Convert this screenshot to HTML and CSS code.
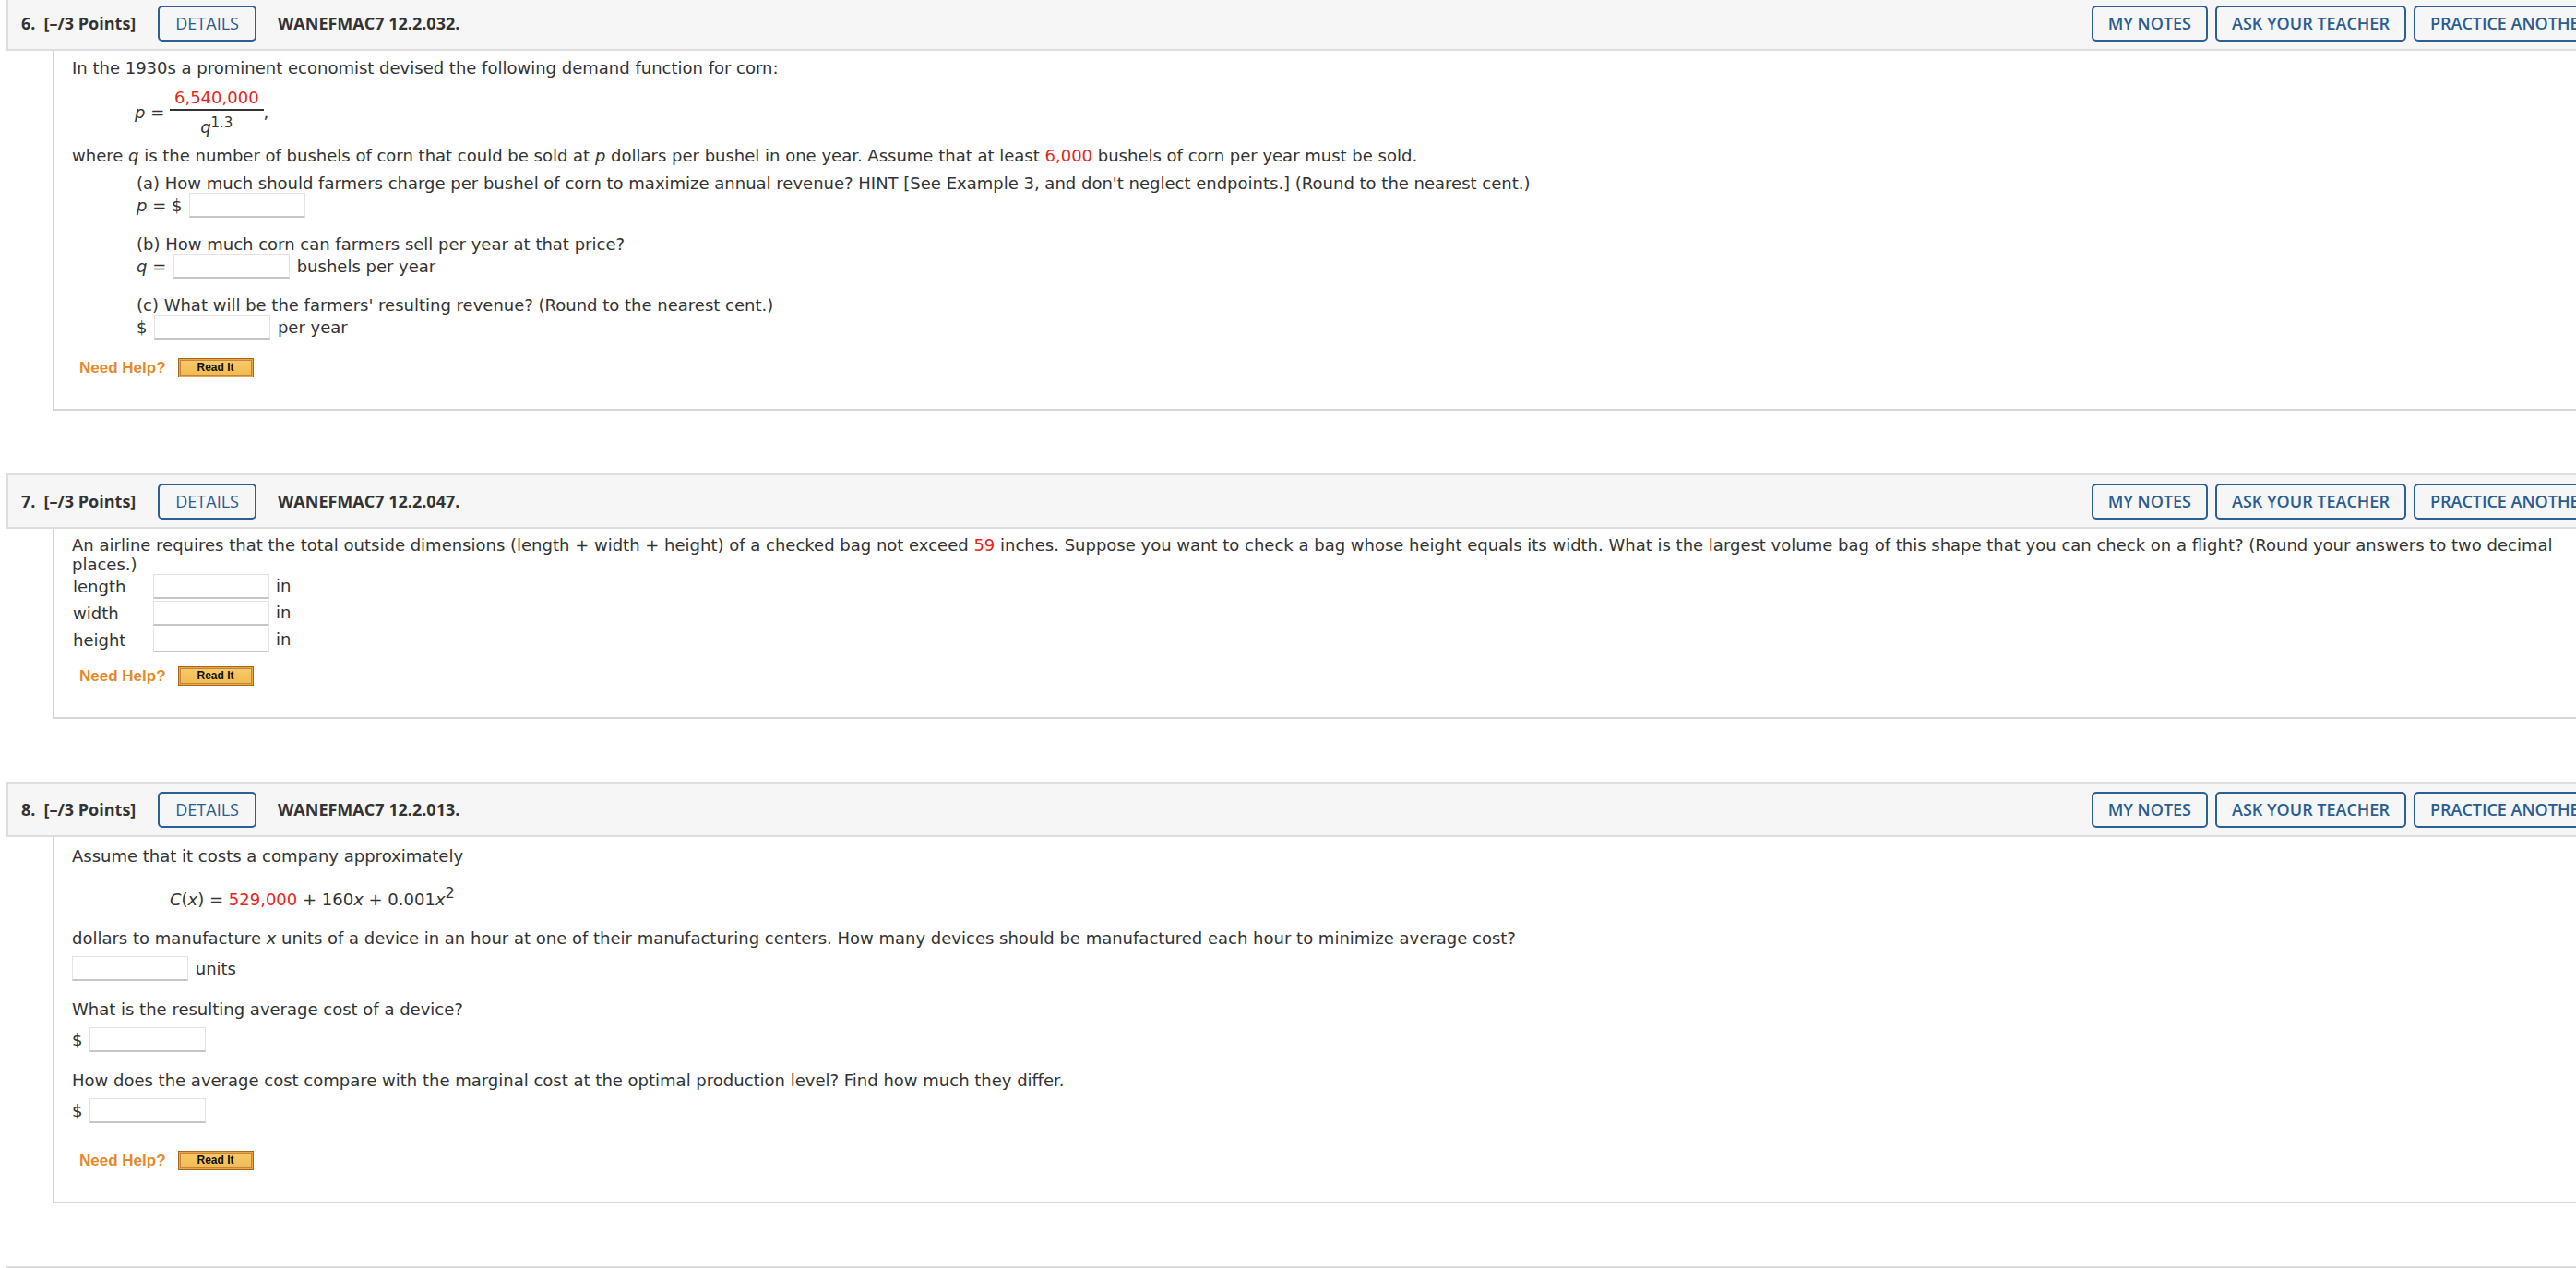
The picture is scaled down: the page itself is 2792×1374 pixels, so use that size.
FILE: index.html
```html
<!DOCTYPE html>
<html lang="en">
<head>
<meta charset="utf-8">
<title>WebAssign</title>
<link rel="stylesheet" href="styles.css">
</head>
<body>
<div class="page">

  <section class="question">
    <div class="qhead">
      <div class="qhead-left">
        <span class="qnum">6.</span><span class="qpts">[–/3 Points]</span>
        <button class="btn btn-details">DETAILS</button>
        <span class="qcode">WANEFMAC7 12.2.032.</span>
      </div>
      <div class="qhead-right">
        <button class="btn">MY NOTES</button>
        <button class="btn">ASK YOUR TEACHER</button>
        <button class="btn">PRACTICE ANOTHER</button>
      </div>
    </div>
    <div class="qbody">
      <p class="txt">In the 1930s a prominent economist devised the following demand function for corn:</p>
      <div class="eq"><i>p</i> = <span class="frac"><span class="num red">6,540,000</span><span class="den"><i>q</i><sup class="exp">1.3</sup></span></span>,</div>
      <p class="txt">where <i>q</i> is the number of bushels of corn that could be sold at <i>p</i> dollars per bushel in one year. Assume that at least <span class="red">6,000</span> bushels of corn per year must be sold.</p>
      <div class="parts">
        <div class="part">
          <p class="txt">(a) How much should farmers charge per bushel of corn to maximize annual revenue? HINT [See Example 3, and don't neglect endpoints.] (Round to the nearest cent.)</p>
          <div class="ans"><i>p</i> = $ <input class="blank" type="text"></div>
        </div>
        <div class="part">
          <p class="txt">(b) How much corn can farmers sell per year at that price?</p>
          <div class="ans"><i>q</i> = <input class="blank" type="text"> bushels per year</div>
        </div>
        <div class="part">
          <p class="txt">(c) What will be the farmers' resulting revenue? (Round to the nearest cent.)</p>
          <div class="ans">$ <input class="blank" type="text"> per year</div>
        </div>
      </div>
      <div class="help help-q6">
        <span class="help-label">Need Help?</span>
        <button class="readit"><span class="readit-in">Read It</span></button>
      </div>
    </div>
  </section>

  <section class="question">
    <div class="qhead">
      <div class="qhead-left">
        <span class="qnum">7.</span><span class="qpts">[–/3 Points]</span>
        <button class="btn btn-details">DETAILS</button>
        <span class="qcode">WANEFMAC7 12.2.047.</span>
      </div>
      <div class="qhead-right">
        <button class="btn">MY NOTES</button>
        <button class="btn">ASK YOUR TEACHER</button>
        <button class="btn">PRACTICE ANOTHER</button>
      </div>
    </div>
    <div class="qbody qbody-q7">
      <p class="txt">An airline requires that the total outside dimensions (length + width + height) of a checked bag not exceed <span class="red">59</span> inches. Suppose you want to check a bag whose height equals its width. What is the largest volume bag of this shape that you can check on a flight? (Round your answers to two decimal places.)</p>
      <div class="dims">
        <span class="dim-label">length</span><input class="blank" type="text"><span class="dim-unit">in</span>
        <span class="dim-label">width</span><input class="blank" type="text"><span class="dim-unit">in</span>
        <span class="dim-label">height</span><input class="blank" type="text"><span class="dim-unit">in</span>
      </div>
      <div class="help help-q7">
        <span class="help-label">Need Help?</span>
        <button class="readit"><span class="readit-in">Read It</span></button>
      </div>
    </div>
  </section>

  <section class="question">
    <div class="qhead">
      <div class="qhead-left">
        <span class="qnum">8.</span><span class="qpts">[–/3 Points]</span>
        <button class="btn btn-details">DETAILS</button>
        <span class="qcode">WANEFMAC7 12.2.013.</span>
      </div>
      <div class="qhead-right">
        <button class="btn">MY NOTES</button>
        <button class="btn">ASK YOUR TEACHER</button>
        <button class="btn">PRACTICE ANOTHER</button>
      </div>
    </div>
    <div class="qbody qbody-q8">
      <p class="txt">Assume that it costs a company approximately</p>
      <p class="txt cost"><i>C</i>(<i>x</i>) = <span class="red">529,000</span> + 160<i>x</i> + 0.001<i>x</i><sup class="sq">2</sup></p>
      <p class="txt gap-21">dollars to manufacture <i>x</i> units of a device in an hour at one of their manufacturing centers. How many devices should be manufactured each hour to minimize average cost?</p>
      <div class="ans gap-9"><input class="blank flush" type="text"> units</div>
      <p class="txt gap-20">What is the resulting average cost of a device?</p>
      <div class="ans gap-9">$ <input class="blank" type="text"></div>
      <p class="txt gap-20">How does the average cost compare with the marginal cost at the optimal production level? Find how much they differ.</p>
      <div class="ans gap-9">$ <input class="blank" type="text"></div>
      <div class="help help-q8">
        <span class="help-label">Need Help?</span>
        <button class="readit"><span class="readit-in">Read It</span></button>
      </div>
    </div>
  </section>

  <section class="question">
    <div class="qhead"></div>
  </section>

</div>
</body>
</html>
```

FILE: styles.css
```css
html, body {
  margin: 0;
  padding: 0;
  background: #ffffff;
  overflow: hidden;
}

body {
  font-family: "DejaVu Sans", Verdana, sans-serif;
  font-size: 18px;
  line-height: 21px;
  color: #333333;
}

.page {
  width: 2830px;
  margin-left: 7px;
  margin-top: -5px;
}

.question + .question {
  margin-top: 68px;
}

/* ---------- header bar ---------- */
.qhead {
  height: 60px;
  box-sizing: border-box;
  border: 2px solid #dedede;
  background: #f6f6f6;
  display: flex;
  align-items: center;
  justify-content: space-between;
  padding: 0 10px 0 14px;
  font-family: "Open Sans", sans-serif;
  font-size: 18px;
  color: #333333;
}

.qhead-left,
.qhead-right {
  display: flex;
  align-items: center;
}

.qhead-right {
  gap: 8px;
}

.qnum,
.qpts,
.qcode {
  font-weight: 700;
}

.qpts {
  margin-left: 9px;
}

.qcode {
  margin-left: 23px;
}

.btn {
  height: 39px;
  box-sizing: border-box;
  border: 2px solid #2c5f94;
  border-radius: 5px;
  background: transparent;
  color: #2a5d91;
  font-family: "Open Sans", sans-serif;
  font-size: 18px;
  font-weight: 600;
  padding: 0 16px;
  line-height: 1;
  white-space: nowrap;
}

.btn-details {
  margin-left: 24px;
  font-weight: 400;
  padding: 0 17px;
}

/* ---------- question body ---------- */
.qbody {
  margin-left: 50px;
  border-left: 2px solid #d2d2d2;
  border-bottom: 2px solid #d6d6d6;
  padding: 8px 37px 34px 19px;
}

.qbody-q7 {
  padding-top: 7px;
}

.qbody-q8 {
  padding-top: 10px;
}

.txt {
  margin: 0;
}

.red {
  color: #e4261d;
}

.eq {
  margin: 11px 0 10px 68px;
}

.frac {
  display: inline-block;
  vertical-align: -16px;
  text-align: center;
}

.num {
  display: block;
  padding: 0 5px 2px;
  border-bottom: 2px solid #333333;
}

.den {
  display: block;
  padding-top: 7px;
}

.exp {
  font-size: 15px;
  line-height: 0;
  vertical-align: 6px;
}

.parts {
  margin-top: 9px;
  margin-left: 70px;
}

.part + .part {
  margin-top: 18px;
}

.blank {
  width: 126px;
  height: 27px;
  box-sizing: border-box;
  border: 1px solid #e3e3e3;
  border-bottom: 2px solid #c6c6c6;
  border-radius: 0;
  margin: 0 2px;
  padding: 0 4px;
  font: inherit;
  background: #ffffff;
  vertical-align: baseline;
}

.blank.flush {
  margin-left: 0;
}

/* airline dims table */
.dims {
  display: grid;
  grid-template-columns: 88px 126px auto;
  row-gap: 2px;
  align-items: center;
}

.dims .blank {
  margin: 0;
}

.dim-label {
  padding-left: 1px;
}

.dim-unit {
  padding-left: 7px;
  margin-top: -3px;
}

/* cost function */
.cost {
  margin-top: 26px;
  margin-left: 106px;
}

.sq {
  font-size: 16px;
  line-height: 0;
  vertical-align: 8px;
}

.gap-21 { margin-top: 21px; }
.gap-20 { margin-top: 20px; }
.gap-9  { margin-top: 9px; }

/* ---------- need help ---------- */
.help {
  display: flex;
  align-items: center;
  gap: 13px;
  height: 21px;
  margin-left: 8px;
}

.help-q6 { margin-top: 20px; }
.help-q7 { margin-top: 15px; }
.help-q8 { margin-top: 30px; }

.help-label {
  font-family: "Liberation Sans", Arial, sans-serif;
  font-weight: 700;
  font-size: 17px;
  color: #e5892c;
}

.readit {
  width: 82px;
  height: 21px;
  box-sizing: border-box;
  padding: 1px;
  border: 1px solid #a8691f;
  background: #eda444;
  display: flex;
}

.readit-in {
  flex: 1;
  border: 1px solid #c4843a;
  background: linear-gradient(#f7ca68, #f1bb52);
  font-family: "Liberation Sans", Arial, sans-serif;
  font-weight: 700;
  font-size: 12px;
  line-height: 15px;
  color: #111111;
  text-align: center;
}
```
